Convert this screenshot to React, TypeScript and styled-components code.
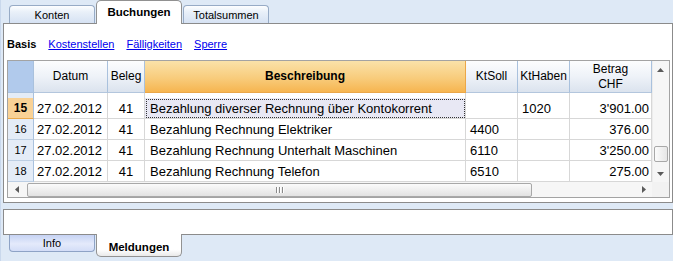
import React from 'react';
import styled, { createGlobalStyle, css } from 'styled-components';

const GlobalStyle = createGlobalStyle`
  html, body {
    margin: 0;
    padding: 0;
    background: #dee9f6;
  }
  body {
    font-family: "Liberation Sans", Arial, sans-serif;
    color: #000;
  }
`;

// Layout shell
const Window = styled.div`
  width: 673px;
  height: 261px;
  display: flex;
  flex-direction: column;
  overflow: hidden;
  background: #dee9f6;
  box-shadow: inset 1px 0 0 #c9d8ec;
`;

const TopTabStrip = styled.div`
  display: flex;
  align-items: flex-end;
  gap: 1px;
  height: 23px;
  padding-left: 9px;
`;

const TopTab = styled.div<{ $active?: boolean }>`
  box-sizing: border-box;
  width: 86px;
  height: 18px;
  display: flex;
  align-items: center;
  justify-content: center;
  font-size: 11px;
  border: 1px solid #97abc6;
  border-bottom: none;
  border-radius: 4px 4px 0 0;
  background: linear-gradient(#fdfeff 0%, #e9f0f9 35%, #d6e2f3 100%);

  ${({ $active }) =>
    $active &&
    css`
      height: 24px;
      margin-bottom: -1px;
      position: relative;
      z-index: 2;
      padding-bottom: 2px;
      font-size: 11.5px;
      font-weight: bold;
      background: #fff;
      border-color: #919191;
      border-radius: 5px 5px 0 0;
    `}
`;

const Panel = styled.div`
  box-sizing: border-box;
  margin-left: 3px;
  width: 670px;
  height: 180px;
  border: 1px solid #8b8b8b;
  background: #fff;
  display: flex;
  flex-direction: column;
`;

const SubNav = styled.div`
  display: flex;
  align-items: flex-start;
  gap: 12px;
  height: 36px;
  box-sizing: border-box;
  padding: 14px 0 0 3px;
  font-size: 11px;
  line-height: 13px;
`;

const SubNavItem = styled.span<{ $current?: boolean }>`
  color: ${({ $current }) => ($current ? '#000' : '#0000ee')};
  font-weight: ${({ $current }) => ($current ? 'bold' : 'normal')};
  text-decoration: ${({ $current }) => ($current ? 'none' : 'underline')};
`;

// Grid
const GridFrame = styled.div`
  box-sizing: border-box;
  margin-left: 3px;
  width: 663px;
  height: 138px;
  border: 1px solid #a3a3a3;
  display: flex;
  flex-direction: column;
`;

const GridBody = styled.div`
  display: flex;
  height: 121px;
`;

const Sheet = styled.div`
  display: grid;
  grid-template-columns: 26px 74px 37px 321px 52px 52px 82px;
  grid-template-rows: 32px 5px repeat(4, 21px);
  width: 644px;
`;

const CornerCell = styled.div`
  background: #b1caec;
  border-right: 1px solid #a9c1dd;
  border-bottom: 1px solid #a9c1dd;
`;

const HeadCell = styled.div<{ $accent?: boolean }>`
  box-sizing: border-box;
  display: flex;
  align-items: center;
  justify-content: center;
  text-align: center;
  font-size: 12px;
  line-height: 15px;
  border-right: 1px solid #a9c1dd;
  border-bottom: 1px solid #b3c6dd;
  background: linear-gradient(#fcfdfe 0%, #eef2f8 50%, #dbe3ee 100%);

  ${({ $accent }) =>
    $accent &&
    css`
      font-weight: bold;
      background: linear-gradient(#fae2a9 0%, #f8cc7c 55%, #f6b550 100%);
      border-right-color: #eba748;
      border-bottom-color: #eba748;
    `}
`;

const RowHead = styled.div<{ $current?: boolean }>`
  box-sizing: border-box;
  display: flex;
  align-items: center;
  justify-content: center;
  font-size: 11px;
  background: #e4ecf7;
  border-right: 1px solid #a9c1dd;
  border-bottom: 1px solid #bccee3;

  ${({ $current }) =>
    $current &&
    css`
      font-size: 12px;
      font-weight: bold;
      background: #f9d296;
      border-bottom-color: #eaa94c;
    `}
`;

const Cell = styled.div<{ $align?: 'left' | 'center' | 'right'; $pad?: number; $focus?: boolean }>`
  box-sizing: border-box;
  display: flex;
  align-items: center;
  justify-content: ${({ $align }) =>
    $align === 'right' ? 'flex-end' : $align === 'center' ? 'center' : 'flex-start'};
  padding: 0 ${({ $align }) => ($align === 'right' ? 2 : 0)}px 0 ${({ $pad }) => $pad ?? 4}px;
  font-size: 13px;
  white-space: nowrap;
  overflow: hidden;
  background: #fff;
  border-right: 1px solid #d7d7d7;
  border-bottom: 1px solid #d7d7d7;

  ${({ $focus }) =>
    $focus &&
    css`
      background: #e8e8f4;
      outline: 1px dotted #333;
      outline-offset: -2px;
    `}
`;

const FillerCell = styled.div`
  background: #fff;
  border-right: 1px solid #d7d7d7;
`;

const FillerHead = styled.div`
  background: #e4ecf7;
  border-right: 1px solid #a9c1dd;
`;

// Scrollbars
const VScroll = styled.div`
  width: 17px;
  display: flex;
  flex-direction: column;
  background: #f6f6f6;
  box-shadow: inset 1px 0 0 #ececec;
`;

const ArrowButton = styled.div<{ $wide?: number }>`
  flex: 0 0 ${({ $wide }) => $wide ?? 17}px;
  display: flex;
  align-items: center;
  justify-content: center;
`;

const VTrack = styled.div`
  flex: 1;
  display: flex;
  flex-direction: column;
  align-items: center;
`;

const VThumb = styled.div`
  box-sizing: border-box;
  margin-top: 68px;
  width: 14px;
  height: 16px;
  border: 1px solid #a8a8a8;
  border-radius: 2px;
  background: linear-gradient(90deg, #fbfbfb, #e6e6e6);
`;

const HScrollRow = styled.div`
  display: flex;
  height: 15px;
`;

const HScroll = styled.div`
  width: 644px;
  display: flex;
  align-items: center;
  background: #f6f6f6;
`;

const HTrack = styled.div`
  flex: 1;
  display: flex;
  align-items: center;
  height: 100%;
`;

const HThumb = styled.div`
  box-sizing: border-box;
  margin-left: 2px;
  width: 505px;
  height: 14px;
  border: 1px solid #a8a8a8;
  border-radius: 2px;
  background: linear-gradient(#fbfbfb, #e2e2e2);
  display: flex;
  align-items: center;
  justify-content: center;
  gap: 1px;
`;

const Grip = styled.span`
  width: 1px;
  height: 6px;
  background: #8a8a8a;
  box-shadow: 1px 0 0 #fff;
  margin-right: 1px;
`;

const ScrollCorner = styled.div`
  flex: 1;
  background: #f2f2f2;
`;

// Lower area
const MessageBox = styled.div`
  box-sizing: border-box;
  margin: 6px 0 0 3px;
  width: 670px;
  height: 26px;
  border: 1px solid #8b8b8b;
  background: #fff;
`;

const BottomTabStrip = styled.div`
  display: flex;
  align-items: flex-start;
  gap: 1px;
  padding-left: 9px;
`;

const BottomTab = styled.div<{ $active?: boolean }>`
  box-sizing: border-box;
  width: 86px;
  height: 17px;
  display: flex;
  align-items: center;
  justify-content: center;
  font-size: 11px;
  border: 1px solid #8ea3c6;
  border-top: none;
  border-radius: 0 0 4px 4px;
  background: linear-gradient(#c6d3f4 0%, #e4eafb 55%, #d3ddf7 100%);

  ${({ $active }) =>
    $active &&
    css`
      margin-top: -1px;
      height: 23px;
      position: relative;
      z-index: 2;
      padding-top: 3px;
      font-size: 11.5px;
      font-weight: bold;
      border-color: #929292;
      border-radius: 0 0 5px 5px;
      background: linear-gradient(#fff 0%, #fff 70%, #e9e9e9 100%);
    `}
`;

const Tri = ({ dir }: { dir: 'up' | 'down' | 'left' | 'right' }) => {
  const d = {
    up: 'M0 4 L3.5 0 L7 4 Z',
    down: 'M0 0 L7 0 L3.5 4 Z',
    left: 'M4 0 L4 7 L0 3.5 Z',
    right: 'M0 0 L4 3.5 L0 7 Z',
  }[dir];
  const vertical = dir === 'up' || dir === 'down';
  return (
    <svg width={vertical ? 7 : 4} height={vertical ? 4 : 7} viewBox={vertical ? '0 0 7 4' : '0 0 4 7'}>
      <path d={d} fill="#5a5a5a" />
    </svg>
  );
};

type Entry = {
  nr: string;
  datum: string;
  beleg: string;
  text: string;
  soll: string;
  haben: string;
  betrag: string;
};

const entries: Entry[] = [
  { nr: '15', datum: '27.02.2012', beleg: '41', text: 'Bezahlung diverser Rechnung über Kontokorrent', soll: '', haben: '1020', betrag: "3'901.00" },
  { nr: '16', datum: '27.02.2012', beleg: '41', text: 'Bezahlung Rechnung Elektriker', soll: '4400', haben: '', betrag: '376.00' },
  { nr: '17', datum: '27.02.2012', beleg: '41', text: 'Bezahlung Rechnung Unterhalt Maschinen', soll: '6110', haben: '', betrag: "3'250.00" },
  { nr: '18', datum: '27.02.2012', beleg: '41', text: 'Bezahlung Rechnung Telefon', soll: '6510', haben: '', betrag: '275.00' },
];

const App: React.FC = () => {
  return (
    <>
      <GlobalStyle />
      <Window>
        <TopTabStrip>
          <TopTab>Konten</TopTab>
          <TopTab $active>Buchungen</TopTab>
          <TopTab>Totalsummen</TopTab>
        </TopTabStrip>

        <Panel>
          <SubNav>
            <SubNavItem $current>Basis</SubNavItem>
            <SubNavItem>Kostenstellen</SubNavItem>
            <SubNavItem>Fälligkeiten</SubNavItem>
            <SubNavItem>Sperre</SubNavItem>
          </SubNav>

          <GridFrame>
            <GridBody>
              <Sheet>
                <CornerCell />
                <HeadCell>Datum</HeadCell>
                <HeadCell>Beleg</HeadCell>
                <HeadCell $accent>Beschreibung</HeadCell>
                <HeadCell>KtSoll</HeadCell>
                <HeadCell>KtHaben</HeadCell>
                <HeadCell>
                  Betrag
                  <br />
                  CHF
                </HeadCell>

                <FillerHead />
                {Array.from({ length: 6 }).map((_, i) => (
                  <FillerCell key={i} />
                ))}

                {entries.map((e, i) => (
                  <React.Fragment key={e.nr}>
                    <RowHead $current={i === 0}>{e.nr}</RowHead>
                    <Cell $pad={3}>{e.datum}</Cell>
                    <Cell $align="center" $pad={0}>{e.beleg}</Cell>
                    <Cell $pad={5} $focus={i === 0}>{e.text}</Cell>
                    <Cell>{e.soll}</Cell>
                    <Cell>{e.haben}</Cell>
                    <Cell $align="right">{e.betrag}</Cell>
                  </React.Fragment>
                ))}
              </Sheet>

              <VScroll>
                <ArrowButton>
                  <Tri dir="up" />
                </ArrowButton>
                <VTrack>
                  <VThumb />
                </VTrack>
                <ArrowButton>
                  <Tri dir="down" />
                </ArrowButton>
              </VScroll>
            </GridBody>

            <HScrollRow>
              <HScroll>
                <ArrowButton>
                  <Tri dir="left" />
                </ArrowButton>
                <HTrack>
                  <HThumb>
                    <Grip />
                    <Grip />
                    <Grip />
                  </HThumb>
                </HTrack>
                <ArrowButton>
                  <Tri dir="right" />
                </ArrowButton>
              </HScroll>
              <ScrollCorner />
            </HScrollRow>
          </GridFrame>
        </Panel>

        <MessageBox />

        <BottomTabStrip>
          <BottomTab>Info</BottomTab>
          <BottomTab $active>Meldungen</BottomTab>
        </BottomTabStrip>
      </Window>
    </>
  );
};

export default App;
